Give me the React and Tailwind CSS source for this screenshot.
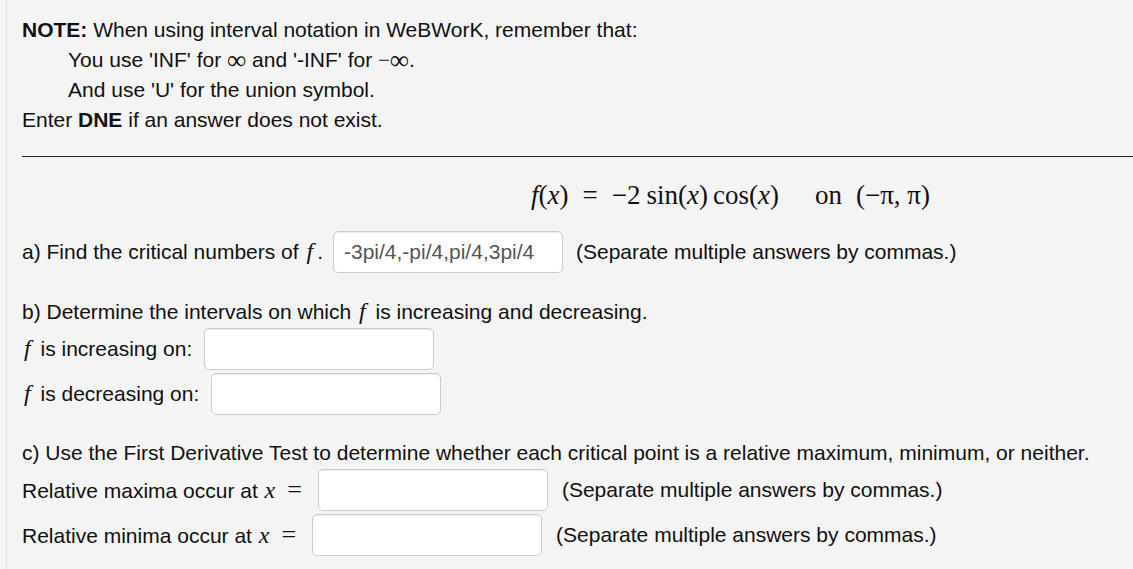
const M = ({ children, className = "" }) => (
  <span className={`font-['Liberation_Serif',serif] italic ${className}`}>{children}</span>
);

const Field = ({ value = "", className = "" }) => (
  <span
    className={`inline-flex shrink-0 items-center h-[42px] w-[230px] rounded-[5px] border border-[#cccccc] bg-white px-[10px] text-[#555555] shadow-[inset_0_1px_1px_rgba(0,0,0,0.075)] ${className}`}
  >
    {value}
  </span>
);

const Inf = () => (
  <span className="font-['Liberation_Serif',serif] text-[27px] leading-[0] align-[-2px]">∞</span>
);

const F = () => <M className="ml-[2px] mr-[4px] text-[24px] leading-[20px]">f</M>;

const Eq = () => (
  <span className="whitespace-nowrap">
    <M className="ml-[1px] text-[24px]">x</M>
    <span className="ml-[12px] mr-[3px] font-['Liberation_Serif',serif] text-[26px]">=</span>
  </span>
);

export default function App() {
  return (
    <div className="min-h-[569px] w-[1133px] overflow-hidden bg-[#f4f4f4] font-['Liberation_Sans',Arial,sans-serif] text-[21px] text-[#111111]">
      <div className="ml-[6px] min-h-[569px] border-l border-[#e2e2e2] pl-[15px] pt-[15px]">
        <div className="leading-[30px]">
          <div>
            <b>NOTE:</b> When using interval notation in WeBWorK, remember that:
          </div>
          <div className="pl-[46px]">
            You use 'INF' for <Inf /> and '-INF' for{" "}
            <span className="font-['Liberation_Serif',serif]">−</span>
            <Inf />.
          </div>
          <div className="pl-[46px]">And use 'U' for the union symbol.</div>
          <div>
            Enter <b>DNE</b> if an answer does not exist.
          </div>
        </div>

        <div className="mt-[21px] h-[1px] w-[1200px] bg-[#222222]" />

        <div className="flex h-[74px] items-center whitespace-pre pl-[509px] pt-[2px] font-['Liberation_Serif',serif] text-[27px]">
          <span className="italic">f</span>(<span className="italic">x</span>)
          <span className="mx-[14px]">=</span>−2<span className="ml-[6px]">sin(</span>
          <span className="italic">x</span>)<span className="ml-[5px]">cos(</span>
          <span className="italic">x</span>)<span className="ml-[36px]">on</span>
          <span className="ml-[14px]">(−π, π)</span>
        </div>

        <div className="flex h-[42px] items-center gap-[10px]">
          <span>
            a) Find the critical numbers of <F />.
          </span>
          <Field value="-3pi/4,-pi/4,pi/4,3pi/4" />
          <span className="ml-[3px] whitespace-nowrap">(Separate multiple answers by commas.)</span>
        </div>

        <div className="mt-[24px] leading-[30px] whitespace-nowrap">
          b) Determine the intervals on which <F /> is increasing and decreasing.
        </div>
        <div className="mt-[1px] flex h-[42px] items-center gap-[12px]">
          <span className="leading-[30px]">
            <F /> is increasing on:
          </span>
          <Field />
        </div>
        <div className="mt-[3px] flex h-[42px] items-center gap-[12px]">
          <span className="leading-[30px]">
            <F /> is decreasing on:
          </span>
          <Field />
        </div>

        <div className="mt-[23px] leading-[30px] whitespace-nowrap">
          c) Use the First Derivative Test to determine whether each critical point is a relative maximum, minimum, or
          neither.
        </div>
        <div className="mt-[1px] flex h-[42px] items-center gap-[13px]">
          <span className="whitespace-nowrap leading-[30px]">
            Relative maxima occur at <Eq />
          </span>
          <Field />
          <span className="ml-[1px] whitespace-nowrap">(Separate multiple answers by commas.)</span>
        </div>
        <div className="mt-[3px] flex h-[42px] items-center gap-[13px]">
          <span className="whitespace-nowrap leading-[30px]">
            Relative minima occur at <Eq />
          </span>
          <Field />
          <span className="ml-[1px] whitespace-nowrap">(Separate multiple answers by commas.)</span>
        </div>
      </div>
    </div>
  );
}
